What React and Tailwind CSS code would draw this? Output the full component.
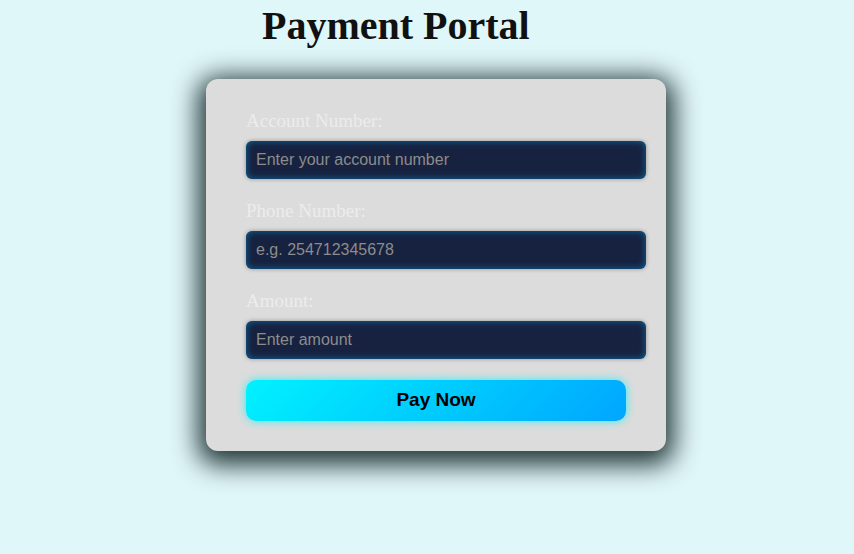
import React from "react";

const fields = [
  { label: "Account Number:", placeholder: "Enter your account number" },
  { label: "Phone Number:", placeholder: "e.g. 254712345678" },
  { label: "Amount:", placeholder: "Enter amount" },
];

const App = () => {
  return (
    <div className="min-h-[554px] w-full bg-[#e0f7fa] pt-[1px]">
      {/* Title */}
      <h1 className="ml-[262px] mt-[2px] text-[40px] leading-[46px] font-bold text-[#111] font-['Liberation_Serif',serif]">
        Payment Portal
      </h1>

      {/* Card */}
      <div className="ml-[206px] mt-[30px] w-[460px] rounded-[12px] bg-[#dcdcdc] pl-[40px] pr-[20px] pt-[31px] pb-[30px] shadow-[0_6px_26px_8px_rgba(0,20,20,0.85)]">
        {fields.map((f, i) => (
          <div key={i} className="mb-[21px]">
            <label className="block text-[19px] leading-[22px] text-[#ececec] font-['Liberation_Serif',serif]">
              {f.label}
            </label>
            <input
              type="text"
              placeholder={f.placeholder}
              className="mt-[9px] block h-[38px] w-full rounded-[6px] bg-[#172240] px-[10px] text-[16px] text-white placeholder:text-[#8c8c8c] outline-none font-['Liberation_Sans',Arial,sans-serif] shadow-[inset_0_0_7px_rgba(0,180,255,0.5),0_0_4px_rgba(0,0,0,0.35)]"
            />
          </div>
        ))}
        <button className="block h-[41px] w-[380px] rounded-[10px] bg-[linear-gradient(135deg,#00f2fe,#00a6ff)] pb-[1px] text-[19px] font-bold text-black font-['Liberation_Sans',Arial,sans-serif] shadow-[0_0_8px_rgba(0,242,254,0.8)]">
          Pay Now
        </button>
      </div>
    </div>
  );
};

export default App;
